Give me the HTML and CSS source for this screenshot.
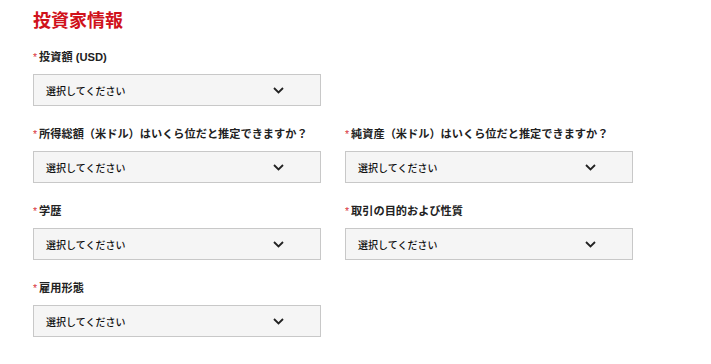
FILE: index.html
```html
<!DOCTYPE html>
<html>
<head>
  <meta charset="UTF-8">
  <title>投資家情報</title>
  <link rel="stylesheet" href="styles.css">
</head>
<body>
  <div class="section">
    <h2 class="title">投資家情報</h2>
    <div class="fields">
      <div class="field">
        <label><span class="req">*</span>投資額 (USD)</label>
        <div class="select"><span>選択してください</span><svg class="chev" width="11" height="7" viewBox="0 0 11 7"><path d="M1 1 L5.5 5.5 L10 1" fill="none" stroke="#222" stroke-width="1.8"/></svg></div>
      </div>
      <div class="field empty"></div>

      <div class="field">
        <label><span class="req">*</span>所得総額（米ドル）はいくら位だと推定できますか？</label>
        <div class="select"><span>選択してください</span><svg class="chev" width="11" height="7" viewBox="0 0 11 7"><path d="M1 1 L5.5 5.5 L10 1" fill="none" stroke="#222" stroke-width="1.8"/></svg></div>
      </div>
      <div class="field">
        <label><span class="req">*</span>純資産（米ドル）はいくら位だと推定できますか？</label>
        <div class="select"><span>選択してください</span><svg class="chev" width="11" height="7" viewBox="0 0 11 7"><path d="M1 1 L5.5 5.5 L10 1" fill="none" stroke="#222" stroke-width="1.8"/></svg></div>
      </div>

      <div class="field">
        <label><span class="req">*</span>学歴</label>
        <div class="select"><span>選択してください</span><svg class="chev" width="11" height="7" viewBox="0 0 11 7"><path d="M1 1 L5.5 5.5 L10 1" fill="none" stroke="#222" stroke-width="1.8"/></svg></div>
      </div>
      <div class="field">
        <label><span class="req">*</span>取引の目的および性質</label>
        <div class="select"><span>選択してください</span><svg class="chev" width="11" height="7" viewBox="0 0 11 7"><path d="M1 1 L5.5 5.5 L10 1" fill="none" stroke="#222" stroke-width="1.8"/></svg></div>
      </div>

      <div class="field">
        <label><span class="req">*</span>雇用形態</label>
        <div class="select"><span>選択してください</span><svg class="chev" width="11" height="7" viewBox="0 0 11 7"><path d="M1 1 L5.5 5.5 L10 1" fill="none" stroke="#222" stroke-width="1.8"/></svg></div>
      </div>
    </div>
  </div>
</body>
</html>
```

FILE: styles.css
```css
body {
  margin: 0;
  background: #fff;
  color: #222;
  font-family: "Liberation Sans", "Noto Sans CJK JP", sans-serif;
}

.section {
  padding: 9px 0 0 33px;
}

.title {
  margin: 0 0 16px 0;
  font-size: 18px;
  line-height: 24px;
  font-weight: bold;
  color: #d0121b;
}

.fields {
  display: grid;
  grid-template-columns: 288px 288px;
  column-gap: 24px;
  row-gap: 20px;
}

.field label {
  display: block;
  height: 16px;
  margin-bottom: 9px;
  font-size: 11.2px;
  line-height: 16px;
  font-weight: bold;
  color: #222;
  white-space: nowrap;
}

.req {
  color: #d8323c;
  font-weight: normal;
  margin-right: 2px;
  font-size: 10.5px;
}

.select {
  box-sizing: border-box;
  height: 32px;
  display: flex;
  align-items: center;
  justify-content: space-between;
  padding: 0 36px 0 12px;
  background: #f5f5f5;
  border: 1px solid #c8c8c8;
  font-size: 10px;
  font-weight: 500;
  color: #111;
}

.chev {
  display: block;
}
```
